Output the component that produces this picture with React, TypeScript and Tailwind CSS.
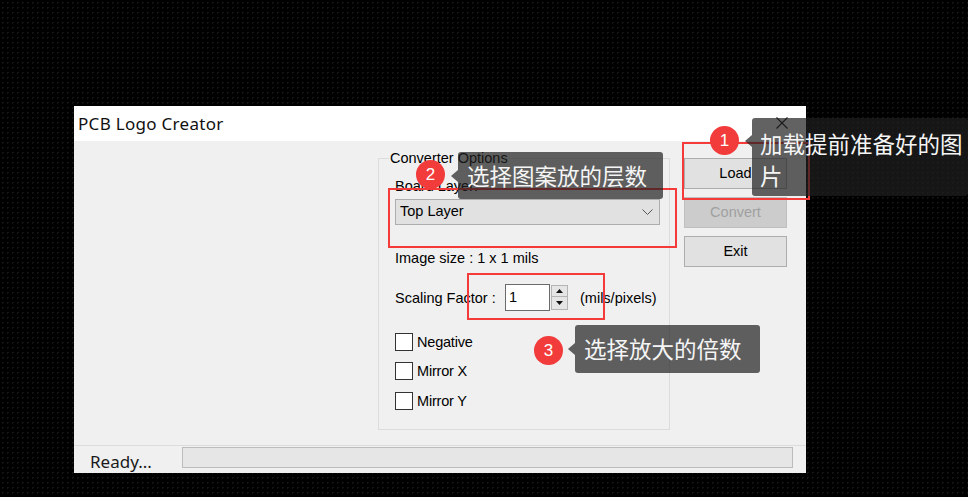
import React from "react";

const sans = "[font-family:'Liberation_Sans',Arial,sans-serif]";
const cjk = "[font-family:'Noto_Sans_CJK_SC','Noto_Sans',sans-serif]";
const segoe = "[font-family:'Noto_Sans','Open_Sans',sans-serif]";

function Badge({ n, className }: { n: string; className: string }) {
  return (
    <div
      className={`absolute w-[29px] h-[29px] rounded-full bg-[#f23b3b] text-white flex items-center justify-center text-[17px] ${sans} ${className}`}
    >
      {n}
    </div>
  );
}

function Tip({
  className,
  arrow,
  children,
}: {
  className: string;
  arrow: string;
  children: React.ReactNode;
}) {
  return (
    <div
      className={`absolute bg-[#202020]/70 rounded-[3px] text-[#f5f5f5] text-[22.5px] ${cjk} ${className}`}
    >
      <svg
        className={`absolute -left-[7px] ${arrow}`}
        width="7"
        height="12"
        viewBox="0 0 7 12"
      >
        <path d="M7 0 L0 6 L7 12 Z" fill="#202020" fillOpacity="0.7" />
      </svg>
      {children}
    </div>
  );
}

function Check({ label, className }: { label: string; className: string }) {
  return (
    <div className={`flex items-center h-[18px] ${className}`}>
      <div className="w-[18px] h-[18px] border border-[#333333] bg-white" />
      <span className="ml-[4px] text-[14.5px] leading-[16px] tracking-[-0.2px]">{label}</span>
    </div>
  );
}

function Btn({ label, disabled }: { label: string; disabled?: boolean }) {
  return (
    <div
      className={`h-[31px] w-[103px] flex items-center justify-center border text-[14.5px] ${
        disabled
          ? "bg-[#cccccc] border-[#bfbfbf] text-[#a0a0a0]"
          : "bg-[#e1e1e1] border-[#adadad] text-black"
      }`}
    >
      {label}
    </div>
  );
}

export default function App() {
  return (
    <div className="relative w-[968px] h-[497px] overflow-hidden bg-black bg-[radial-gradient(#151515_1px,transparent_1px)] bg-[size:5px_5px]">
      {/* dialog window */}
      <div className={`absolute left-[74px] top-[106px] w-[732px] h-[367px] flex flex-col bg-[#f0f0f0] text-black ${sans}`}>
        <div className="h-[35px] shrink-0 bg-white flex items-center justify-between pl-[4px] pr-[18px]">
          <span className={`text-[17px] tracking-[0.3px] text-[#111] ${segoe}`}>PCB Logo Creator</span>
          <svg width="12" height="12" viewBox="0 0 12 12" className="mt-[-2px]">
            <path d="M0.5 0.5 L11.5 11.5 M11.5 0.5 L0.5 11.5" stroke="#111" strokeWidth="1.1" />
          </svg>
        </div>

        <div className="h-[304px] shrink-0 flex pl-[304px] pt-[9px]">
          <fieldset className="w-[292px] h-[280px] border border-[#dcdcdc] m-0 p-0">
            <legend className="ml-[10px] px-[1px] text-[14.5px] leading-[16px]">Converter Options</legend>
            <div className="pl-[16px] flex flex-col">
              <div className="mt-[12px] h-[16px] text-[14.5px] leading-[16px]">Board Layer:</div>
              <div className="mt-[5px] w-[265px] h-[26px] bg-[#e1e1e1] border border-[#adadad] flex items-center justify-between pl-[4px] pr-[6px]">
                <span className="text-[14.5px]">Top Layer</span>
                <svg width="11" height="6" viewBox="0 0 11 6">
                  <path d="M0.5 0.5 L5.5 5.5 L10.5 0.5" fill="none" stroke="#555" strokeWidth="1" />
                </svg>
              </div>
              <div className="mt-[25px] h-[16px] text-[14.5px] leading-[16px]">Image size : 1 x 1 mils</div>
              <div className="mt-[18px] h-[27px] flex items-center">
                <span className="w-[110px] text-[14.5px] pt-[2px]">Scaling Factor :</span>
                <div className="w-[45px] h-[27px] bg-white border border-[#6b6b6b] flex items-center pl-[3px] text-[14.5px]">1</div>
                <div className="ml-[1px] w-[17px] h-[25px] flex flex-col">
                  <div className="h-[12px] bg-[#e5e5e5] border border-[#b4b4b4] flex items-center justify-center">
                    <svg width="7" height="4" viewBox="0 0 7 4"><path d="M0 4 L3.5 0 L7 4 Z" fill="#111" /></svg>
                  </div>
                  <div className="h-[13px] bg-[#e5e5e5] border border-t-0 border-[#b4b4b4] flex items-center justify-center">
                    <svg width="7" height="4" viewBox="0 0 7 4"><path d="M0 0 L3.5 4 L7 0 Z" fill="#111" /></svg>
                  </div>
                </div>
                <span className="ml-[12px] text-[14.5px] pt-[2px]">(mils/pixels)</span>
              </div>
              <Check label="Negative" className="mt-[22px]" />
              <Check label="Mirror X" className="mt-[11px]" />
              <Check label="Mirror Y" className="mt-[12px]" />
            </div>
          </fieldset>

          <div className="ml-[14px] mt-[8px] flex flex-col gap-[8px]">
            <Btn label="Load" />
            <Btn label="Convert" disabled />
            <Btn label="Exit" />
          </div>
        </div>

        <div className="flex-1 border-t border-[#dcdcdc] flex items-center">
          <span className={`ml-[16px] w-[92px] text-[17px] leading-[20px] text-[#1a1a1a] pt-[4px] ${segoe}`}>Ready...</span>
          <div className="w-[611px] h-[21px] mt-[-5px] bg-[#e6e6e6] border border-[#bcbcbc]" />
        </div>
      </div>

      {/* highlight frames */}
      <div className="absolute left-[682px] top-[142px] w-[128px] h-[58px] border-2 border-[#f53a3a]" />
      <div className="absolute left-[388px] top-[188px] w-[289px] h-[60px] border-2 border-[#f53a3a]" />
      <div className="absolute left-[467px] top-[273px] w-[138px] h-[47px] border-2 border-[#f53a3a]" />

      {/* callouts */}
      <Tip className="left-[752px] top-[118px] w-[216px] h-[78px] pt-[9px] pl-[8px] leading-[32px]" arrow="top-[17px]">
        加载提前准备好的图片
      </Tip>
      <Tip className="left-[458px] top-[152px] w-[205px] h-[47px] pl-[9px] flex items-center" arrow="top-[18px]">
        选择图案放的层数
      </Tip>
      <Tip className="left-[575px] top-[325px] w-[185px] h-[48px] pl-[9px] flex items-center" arrow="top-[18px]">
        选择放大的倍数
      </Tip>

      <Badge n="1" className="left-[710px] top-[126px]" />
      <Badge n="2" className="left-[416px] top-[160px]" />
      <Badge n="3" className="left-[534px] top-[336px]" />
    </div>
  );
}
